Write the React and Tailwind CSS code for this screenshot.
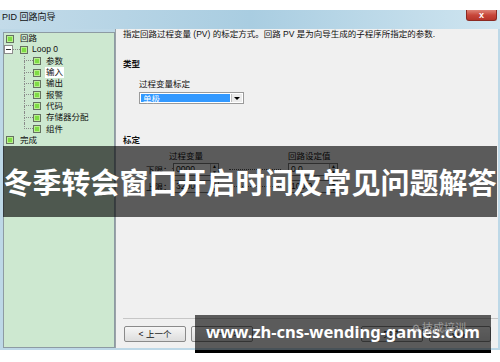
import React from "react";

const SANS = "font-['Liberation_Sans','Noto_Sans_CJK_SC',sans-serif]";

function Box() {
  return (
    <span className="w-[8px] h-[8px] shrink-0 border border-[#667062] bg-[#7fdc45] shadow-[inset_0_0_0_1px_#b9f08f]" />
  );
}

function Child({ label, last, selected }) {
  return (
    <div className="flex h-[11.3px] items-stretch">
      <span className="w-[20px] shrink-0" />
      <span className="w-[9px] shrink-0 flex flex-col">
        <span className="h-1/2 border-l border-b border-dotted border-[#8a8a8a]" />
        <span className={"h-1/2 border-dotted border-[#8a8a8a] " + (last ? "" : "border-l")} />
      </span>
      <span className="flex items-center">
        <Box />
        <span className={"ml-[4px] px-[1px] " + (selected ? "bg-white" : "")}>{label}</span>
      </span>
    </div>
  );
}

function Spin({ value, w }) {
  return (
    <div className={"h-[13px] shrink-0 flex border border-[#7a7a7a] bg-white " + w}>
      <span className="flex-1 pl-[2px] leading-[11px]">{value}</span>
      <span className="w-[8px] flex flex-col border-l border-[#b0b0b0] bg-[#ececec] text-[5px] leading-[5px] text-center">
        <span className="flex-1">▲</span>
        <span className="flex-1">▼</span>
      </span>
    </div>
  );
}

function Btn({ children, className }) {
  return (
    <div
      className={
        "h-[16px] w-[62px] flex items-center justify-center border border-[#8a8a8a] rounded-[2px] bg-gradient-to-b from-[#f6f6f6] to-[#dddddd] text-[8.5px] " +
        (className || "")
      }
    >
      {children}
    </div>
  );
}

export default function App() {
  return (
    <div className={"relative w-[500px] h-[362px] bg-white overflow-hidden text-[8.5px] text-[#111] " + SANS}>
      <div className="h-[10px]" />
      <div className="h-[340px] flex flex-col bg-[#bdd8e7]">
        {/* title bar */}
        <div className="h-[19px] flex justify-between bg-gradient-to-r from-[#c3dbe9] via-[#a9cde1] to-[#cfe5f0]">
          <span className="pl-[2px] pt-[2px] leading-[10px] text-[9px]">PID 回路向导</span>
          <span className="mr-[3px] w-[31px] h-[11px] flex items-center justify-center rounded-b-[3px] border border-t-0 border-[#8b2a22] bg-gradient-to-b from-[#dd8276] via-[#c8473a] to-[#b6352a] text-white text-[9px] font-bold leading-none">
            x
          </span>
        </div>

        {/* body */}
        <div className="flex flex-1 pl-[3px] pr-[2px] pb-[2px]">
          <div className="w-[112px] mt-[3px] bg-[#cde8d0] border border-[#8d9ba3] leading-[11px]">
            <div className="flex items-center h-[11.3px] pl-[2px]">
              <Box />
              <span className="ml-[6px]">回路</span>
            </div>
            <div className="flex items-center h-[11.3px]">
              <span className="w-[9px] h-[9px] shrink-0 flex items-center justify-center border border-[#8c8c8c] bg-white">
                <span className="w-[5px] h-px bg-[#333]" />
              </span>
              <span className="w-[7px] border-t border-dotted border-[#8a8a8a]" />
              <Box />
              <span className="ml-[4px]">Loop 0</span>
            </div>
            <Child label="参数" />
            <Child label="输入" selected />
            <Child label="输出" />
            <Child label="报警" />
            <Child label="代码" />
            <Child label="存储器分配" />
            <Child label="组件" last />
            <div className="flex items-center h-[11.3px] pl-[2px]">
              <Box />
              <span className="ml-[6px]">完成</span>
            </div>
          </div>

          <div className="flex-1 flex flex-col bg-[#f0f0f0] border-l border-[#9aa3a8] leading-[10px]">
            <div className="pl-[7px] h-[10px]">指定回路过程变量 (PV) 的标定方式。回路 PV 是为向导生成的子程序所指定的参数.</div>
            <div className="pl-[7px] mt-[20px] h-[10px] font-bold">类型</div>
            <div className="pl-[23px] mt-[10px] h-[10px]">过程变量标定</div>
            <div className="ml-[23px] mt-[3px] w-[105px] h-[12px] flex border border-[#9a9a9a] bg-white p-px">
              <span className="flex-1 bg-[#3399ff] text-white pl-[2px] leading-[10px]">单极</span>
              <span className="w-[11px] ml-px flex items-center justify-center bg-[#ececec] border-l border-[#c0c0c0]">
                <span className="w-0 h-0 border-x-[3px] border-x-transparent border-t-[3px] border-t-black" />
              </span>
            </div>
            <div className="pl-[7px] mt-[31px] h-[10px] font-bold">标定</div>
            <div className="mt-[6px] h-[10px] flex whitespace-nowrap">
              <span className="ml-[53px]">过程变量</span>
              <span className="ml-[85px]">回路设定值</span>
            </div>
            <div className="mt-[2px] flex items-center whitespace-nowrap">
              <span className="ml-[30px] w-[27px] shrink-0">下限：:</span>
              <Spin value="0000" w="w-[46px]" />
              <span className="ml-[10px] w-[52px] shrink-0 border-t border-dotted border-[#555]" />
              <span className="w-[7px] shrink-0" />
              <Spin value="0.0" w="w-[50px]" />
            </div>
            <div className="mt-[4px] flex items-center whitespace-nowrap">
              <span className="ml-[30px] w-[27px] shrink-0">上限：:</span>
              <Spin value="32000" w="w-[46px]" />
              <span className="ml-[10px] w-[52px] shrink-0 border-t border-dotted border-[#555]" />
              <span className="w-[7px] shrink-0" />
              <Spin value="100.0" w="w-[50px]" />
            </div>

            <div className="mt-auto ml-[7px] border-t border-[#c6c6c6]" />
            <div className="flex pt-[7px] pb-[6px] pl-[8px]">
              <Btn>&lt; 上一个</Btn>
              <Btn className="ml-[5px]">下一个 &gt;</Btn>
              <Btn className="ml-[108px]">完成</Btn>
              <Btn className="ml-[6px]">取消</Btn>
            </div>
          </div>
        </div>
      </div>

      {/* headline band overlay */}
      <div className="absolute left-[3px] right-[3px] top-[146px] h-[71px] bg-black/[0.62] flex items-center justify-center">
        <span className="text-white font-bold text-[29px] leading-none whitespace-nowrap font-['Noto_Sans_CJK_SC',sans-serif]">
          冬季转会窗口开启时间及常见问题解答
        </span>
      </div>

      {/* url banner overlay */}
      <div className="absolute left-[195px] top-[315px] w-[296px] h-[38px] flex flex-col">
        <div className="flex-1 bg-black/[0.62] flex items-center justify-center">
          <span className="text-white font-bold text-[16.5px] leading-none font-['Noto_Sans',sans-serif]">
            www.zh-cns-wending-games.com
          </span>
        </div>
        <div className="h-[3px] bg-black" />
      </div>

      {/* watermark */}
      <div className="absolute left-[412px] top-[322px] flex items-center text-[#9c9c9c] text-[11px] leading-none font-['Noto_Sans_CJK_SC',sans-serif]">
        <span className="mr-[2px] text-[9px]">⚙</span>
        <span>技成培训</span>
      </div>
    </div>
  );
}
